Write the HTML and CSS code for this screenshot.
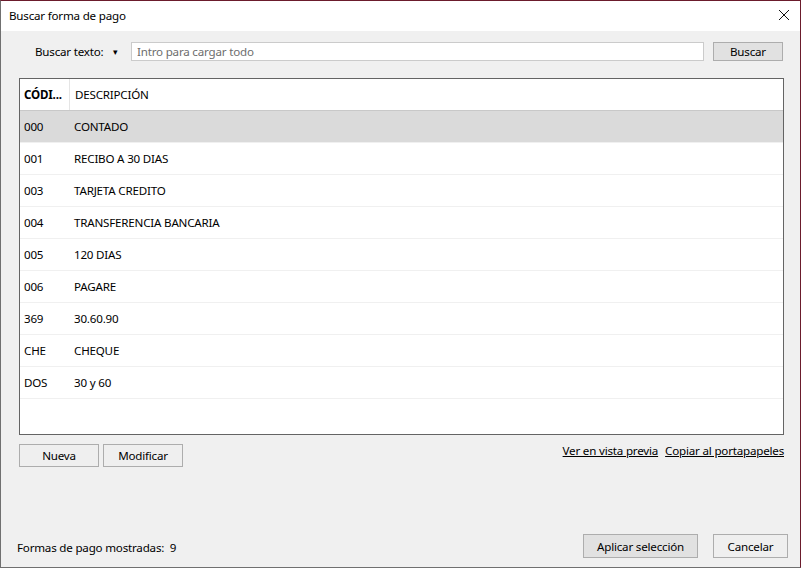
FILE: index.html
```html
<!DOCTYPE html>
<html lang="es">
<head>
  <meta charset="UTF-8">
  <title>Buscar forma de pago</title>
  <link rel="stylesheet" href="styles.css">
</head>
<body>
  <div class="window">
    <div class="titlebar">
      <span class="title">Buscar forma de pago</span>
      <span class="close">
        <svg width="12" height="12" viewBox="0 0 12 12"><path d="M1 1L11 11M11 1L1 11" stroke="#111" stroke-width="1"/></svg>
      </span>
    </div>
    <div class="content">
      <div class="search-row">
        <span class="search-label">Buscar texto:</span>
        <span class="drop">&#9662;</span>
        <input class="search-input" type="text" placeholder="Intro para cargar todo">
        <button class="btn btn-default search-btn">Buscar</button>
      </div>
      <div class="grid">
        <div class="grid-row grid-head">
          <div class="cell code">CÓDI...</div>
          <div class="cell desc">DESCRIPCIÓN</div>
        </div>
        <div class="grid-row selected"><div class="cell code">000</div><div class="cell desc">CONTADO</div></div>
        <div class="grid-row"><div class="cell code">001</div><div class="cell desc">RECIBO A 30 DIAS</div></div>
        <div class="grid-row"><div class="cell code">003</div><div class="cell desc">TARJETA CREDITO</div></div>
        <div class="grid-row"><div class="cell code">004</div><div class="cell desc">TRANSFERENCIA BANCARIA</div></div>
        <div class="grid-row"><div class="cell code">005</div><div class="cell desc">120 DIAS</div></div>
        <div class="grid-row"><div class="cell code">006</div><div class="cell desc">PAGARE</div></div>
        <div class="grid-row"><div class="cell code">369</div><div class="cell desc">30.60.90</div></div>
        <div class="grid-row"><div class="cell code">CHE</div><div class="cell desc">CHEQUE</div></div>
        <div class="grid-row"><div class="cell code">DOS</div><div class="cell desc">30 y 60</div></div>
      </div>
      <div class="action-row">
        <button class="btn">Nueva</button>
        <button class="btn">Modificar</button>
        <div class="links">
          <a href="#">Ver en vista previa</a>
          <a href="#">Copiar al portapapeles</a>
        </div>
      </div>
      <div class="footer">
        <span class="count">Formas de pago mostradas:&nbsp; 9</span>
        <button class="btn btn-default apply-btn">Aplicar selección</button>
        <button class="btn cancel-btn">Cancelar</button>
      </div>
    </div>
  </div>
</body>
</html>
```
FILE: styles.css
```css
html, body {
  margin: 0;
  padding: 0;
  height: 100%;
}
body {
  font-family: 'Noto Sans', 'Liberation Sans', sans-serif;
  font-size: 11.6px;
  letter-spacing: -0.2px;
  color: #000;
  background: #f0f0f0;
}
.window {
  box-sizing: border-box;
  width: 801px;
  height: 568px;
  border-top: 1px solid #6b1b2c;
  border-right: 1px solid #6b1b2c;
  border-left: 1px solid #707070;
  border-bottom: 1px solid #707070;
  display: flex;
  flex-direction: column;
  background: #f0f0f0;
}
.titlebar {
  height: 30px;
  background: #fff;
  display: flex;
  align-items: center;
  justify-content: space-between;
  padding: 0 10px 0 8px;
  flex-shrink: 0;
}
.title {
  margin-top: -1px;
}
.close {
  display: flex;
  margin-top: -2px;
}
.content {
  flex: 1;
  display: flex;
  flex-direction: column;
  padding: 10px 16px 9px 18px;
}
.search-row {
  display: flex;
  align-items: center;
  height: 20px;
  padding-left: 16px;
}
.search-label {
  width: 78px;
}
.drop {
  font-size: 9px;
  width: 18px;
}
.search-input {
  box-sizing: border-box;
  width: 573px;
  height: 19px;
  border: 1px solid #cbcbcb;
  background: #fff;
  font-family: inherit;
  font-size: inherit;
  letter-spacing: inherit;
  padding: 0 5px;
  margin: 0 9px 0 0;
  outline: none;
}
.search-input::placeholder {
  color: #6d6d6d;
}
.btn {
  box-sizing: border-box;
  font-family: inherit;
  font-size: inherit;
  letter-spacing: inherit;
  color: #000;
  background: #efefef;
  border: 1px solid #adadad;
  height: 23px;
  padding: 0;
  margin: 0;
}
.btn-default {
  background: #e1e1e1;
}
.search-btn {
  width: 70px;
  height: 19px;
}
.grid {
  box-sizing: border-box;
  margin-top: 17px;
  width: 765px;
  height: 357px;
  border: 1px solid #646464;
  background: #fff;
}
.grid-row {
  display: flex;
  height: 32px;
  border-bottom: 1px solid #f0f0f0;
  box-sizing: border-box;
}
.grid-head {
  border-bottom: 1px solid #c8c8c8;
}
.grid-head .cell {
  height: 31px;
}
.grid-head .code {
  font-weight: bold;
  border-right: 1px solid #e5e5e5;
}
.selected {
  background: #dadada;
}
.cell {
  display: flex;
  align-items: center;
  padding-left: 4px;
  white-space: nowrap;
}
.code {
  width: 45px;
}
.desc {
  padding-left: 5px;
}
.action-row {
  display: flex;
  align-items: center;
  margin-top: 9px;
  gap: 4px;
}
.action-row .btn {
  width: 80px;
}
.links {
  margin-left: auto;
  display: flex;
  gap: 7px;
  margin-top: -11px;
}
.links a {
  color: #000;
  text-decoration: underline;
}
.footer {
  margin-top: auto;
  display: flex;
  align-items: center;
}
.count {
  margin-left: -2px;
  margin-top: 2px;
}
.apply-btn {
  margin-left: auto;
  width: 115px;
  height: 24px;
}
.cancel-btn {
  width: 75px;
  height: 24px;
  margin-left: 15px;
  margin-right: -4px;
}
```
